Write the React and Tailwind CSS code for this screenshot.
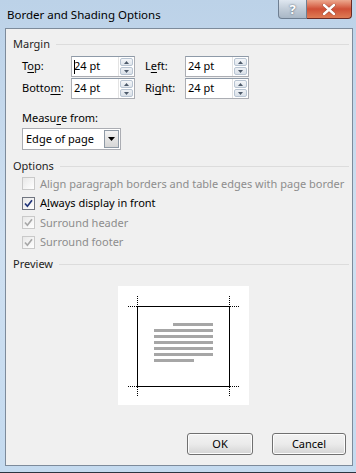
import React from "react";

const FONT = { fontFamily: '"Segoe UI", "Noto Sans", "Open Sans", sans-serif' };

function U({ children }) {
  return <span className="underline underline-offset-2">{children}</span>;
}

function Spinner() {
  return (
    <div className="flex flex-col w-[16px] h-full border-l border-[#e3e3e3] bg-white p-[1px] gap-[1px]">
      <div className="flex-1 flex items-center justify-center rounded-[2px] border border-[#b8c4d2] bg-gradient-to-b from-[#f4f6f9] to-[#dfe5ec]">
        <svg width="5" height="3" viewBox="0 0 5 3"><path d="M0 3 L2.5 0 L5 3 Z" fill="#4d5a6a" /></svg>
      </div>
      <div className="flex-1 flex items-center justify-center rounded-[2px] border border-[#b8c4d2] bg-gradient-to-b from-[#eef1f5] to-[#d9e0e8]">
        <svg width="5" height="3" viewBox="0 0 5 3"><path d="M0 0 L2.5 3 L5 0 Z" fill="#4d5a6a" /></svg>
      </div>
    </div>
  );
}

function NumBox({ value, caret }) {
  return (
    <div className="flex items-stretch w-[64px] h-[21px] border border-[#abadb3] border-t-[#8e9aa8] bg-white">
      <div className="flex-1 flex items-center pl-[2px] text-black">
        {caret && <span className="inline-block w-[1px] h-[14px] bg-black -mr-[1px]" />}
        {value}
      </div>
      <Spinner />
    </div>
  );
}

function Field({ label, value, caret, labelW }) {
  return (
    <div className="flex items-center">
      <div className={labelW}>{label}</div>
      <NumBox value={value} caret={caret} />
    </div>
  );
}

function GroupHead({ title }) {
  return (
    <div className="flex items-center h-[16px] pl-[7px] pr-[3px]">
      <span className="text-[#1e1e1e] mr-[6px]">{title}</span>
      <div className="flex-1 h-[1px] bg-[#dcdcdc]" />
    </div>
  );
}

function Check({ checked, disabled, children }) {
  const border = disabled ? "border-[#c9c9c9]" : "border-[#707580]";
  const mark = disabled ? "#a8a8a8" : "#21357a";
  return (
    <div className="flex items-center h-[19.5px] pl-[16px]">
      <div className={`w-[13px] h-[13px] border ${border} bg-gradient-to-br from-[#e8e8e8] to-[#ffffff] flex items-center justify-center`}>
        {checked && (
          <svg width="9" height="9" viewBox="0 0 9 9">
            <path d="M1 4.5 L3.4 7.2 L8 1.2" fill="none" stroke={mark} strokeWidth="1.7" />
          </svg>
        )}
      </div>
      <span className={`ml-[5px] whitespace-nowrap ${disabled ? "text-[#8d8d8d]" : "text-black"}`}>{children}</span>
    </div>
  );
}

function Btn({ children, w }) {
  return (
    <div className={`${w} h-[22px] flex items-center justify-center rounded-[3px] border border-[#707070] bg-gradient-to-b from-[#f2f2f2] via-[#ebebeb] to-[#d4d4d4] text-black shadow-[inset_0_0_0_1px_#fcfcfc]`}>
      {children}
    </div>
  );
}

function PreviewArt() {
  const lines = [
    [55, 38, 95], [36, 44, 95], [36, 50, 95], [36, 56, 95],
    [36, 62, 95], [36, 68, 95], [36, 74, 76],
  ];
  return (
    <svg width="131" height="119" viewBox="0 0 131 119">
      <rect x="19.5" y="20.5" width="92" height="80" fill="none" stroke="#000" strokeWidth="1" />
      <g stroke="#000" strokeWidth="1" strokeDasharray="1 1">
        <path d="M10 20.5 H19" />
        <path d="M19.5 10 V20" />
        <path d="M112 20.5 H121" />
        <path d="M111.5 10 V20" />
        <path d="M10 100.5 H19" />
        <path d="M19.5 101 V110" />
        <path d="M112 100.5 H121" />
        <path d="M111.5 101 V110" />
      </g>
      {lines.map(([x1, y, x2], i) => (
        <rect key={i} x={x1} y={y - 1} width={x2 - x1} height="3" fill="#a6a6a6" />
      ))}
    </svg>
  );
}

export default function App() {
  return (
    <div
      className="w-[356px] h-[473px] overflow-hidden flex flex-col bg-gradient-to-b from-[#bcd2e8] via-[#cfe0f1] to-[#c4daef] border-b border-[#2b3440] text-[11px]"
      style={FONT}
    >
      {/* title bar */}
      <div className="flex items-start h-[28px] shrink-0">
        <div className="pl-[7px] pt-[6px] text-[11.5px] text-black">Border and Shading Options</div>
        <div className="ml-auto mr-[4px] flex">
          <div className="w-[29px] h-[19px] rounded-bl-[4px] border border-t-0 border-[#6f7f92] bg-gradient-to-b from-[#dfe7f0] via-[#c1ccd8] to-[#a9b7c6] flex items-center justify-center text-white text-[13px] font-bold leading-none [text-shadow:0_0_2px_#3b4a5c]">
            ?
          </div>
          <div className="w-[45px] h-[19px] rounded-br-[4px] border border-t-0 border-l-0 border-[#6b2a24] bg-gradient-to-b from-[#eca88f] via-[#cf4f36] to-[#de7b55] flex items-center justify-center">
            <svg width="14" height="11" viewBox="0 0 14 11">
              <path d="M2 1 L12 10 M12 1 L2 10" stroke="#3a1a16" strokeWidth="3.6" strokeLinecap="round" opacity="0.35" />
              <path d="M2 1 L12 10 M12 1 L2 10" stroke="#ffffff" strokeWidth="2.4" strokeLinecap="round" />
            </svg>
          </div>
        </div>
      </div>

      {/* client area */}
      <div className="ml-[5px] w-[348px] h-[438px] border border-[#7d8b9b] bg-[#f0f0f0] flex flex-col text-black">
        <div className="mt-[7px]">
          <GroupHead title="Margin" />
        </div>

        <div className="mt-[4px] pl-[16px] flex flex-col gap-[1px]">
          <div className="flex items-center">
            <Field label={<>T<U>o</U>p:</>} value="24 pt" caret labelW="w-[49px]" />
            <div className="w-[10px]" />
            <Field label={<>L<U>e</U>ft:</>} value="24 pt" labelW="w-[40px]" />
          </div>
          <div className="flex items-center">
            <Field label={<>Botto<U>m</U>:</>} value="24 pt" labelW="w-[49px]" />
            <div className="w-[10px]" />
            <Field label={<>Ri<U>g</U>ht:</>} value="24 pt" labelW="w-[40px]" />
          </div>
        </div>

        <div className="mt-[11px] pl-[16px] h-[16px] flex items-center">
          Measu<U>r</U>e from:
        </div>
        <div className="mt-[2px] ml-[16px] w-[99px] h-[22px] border border-[#abadb3] bg-white flex items-center">
          <span className="flex-1 pl-[3px]">Edge of page</span>
          <div className="w-[15px] h-[18px] mr-[1px] border border-[#8f9aa6] bg-gradient-to-b from-[#f3f3f3] to-[#d6d6d6] flex items-center justify-center">
            <svg width="7" height="4" viewBox="0 0 7 4"><path d="M0 0 L3.5 4 L7 0 Z" fill="#000" /></svg>
          </div>
        </div>

        <div className="mt-[8px]">
          <GroupHead title="Options" />
        </div>
        <div className="flex flex-col">
          <Check disabled>Align paragraph borders and table edges with page border</Check>
          <Check checked>A<U>l</U>ways display in front</Check>
          <Check checked disabled>Surround header</Check>
          <Check checked disabled>Surround footer</Check>
        </div>

        <div className="mt-[4px]">
          <GroupHead title="Preview" />
        </div>
        <div className="mt-[14px] ml-[112px] w-[131px] h-[119px] bg-white">
          <PreviewArt />
        </div>

        <div className="mt-[28px] flex justify-end pr-[6px] gap-[19px]">
          <Btn w="w-[66px]">OK</Btn>
          <Btn w="w-[74px]">Cancel</Btn>
        </div>
      </div>
    </div>
  );
}
